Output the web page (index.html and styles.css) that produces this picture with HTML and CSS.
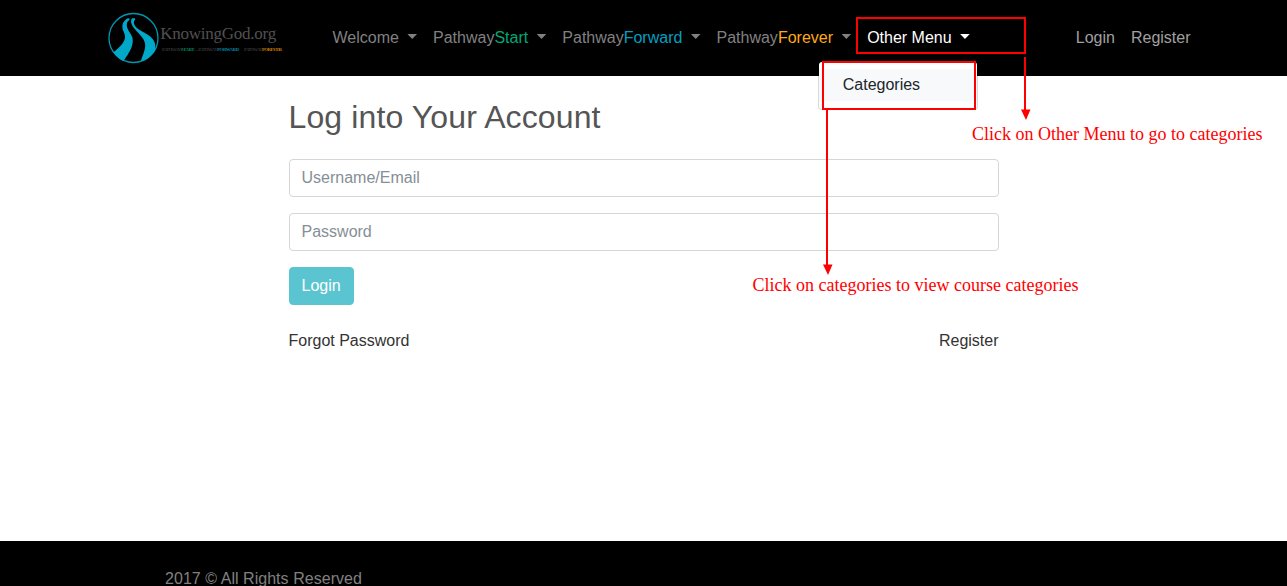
FILE: index.html
```html
<!DOCTYPE html>
<html lang="en">
<head>
<meta charset="utf-8">
<title>KnowingGod.org - Login</title>
<link rel="stylesheet" href="styles.css">
</head>
<body>
<header class="navbar">
  <a class="brand">
    <svg width="176" height="52" viewBox="0 0 176 52">
      <circle cx="25.5" cy="26" r="24.5" fill="none" stroke="#0096b4" stroke-width="1.3"/>
      <path fill="#00a9ca" d="M19.8 6.2C14 9 13.2 15 15.8 20C20 28 13 34 5.500 40.200C8.500 44.500 12 47.500 15.500 49C21 41 26 34 24.500 26C23.500 21 17.500 17 19 11C19.500 9 22.500 8 21.500 6.500Z"/>
      <path fill="#00a9ca" d="M24.300 6.300C22.200 7.800 23 12 25.500 15.500C29.500 21 37 26 37.200 33C37.300 39 34 44 33 49.300C40 47.500 44.500 43 47 38.300C49 29 43 24 36 20.500C30 17.500 25 13.500 26 9.500C26.500 8 28 7.500 26.700 6.200Z"/>
      <text class="logo-name" x="52.200" y="26.500" textLength="116">KnowingGod.org</text>
      <text class="logo-tag" x="54" y="39" textLength="77"><tspan>PATHWAY</tspan><tspan class="start">START</tspan><tspan>—PATHWAY</tspan><tspan class="forward">FORWARD</tspan></text>
      <text class="logo-tag" x="136" y="39" textLength="38"><tspan>PATHWAY</tspan><tspan class="forever">FOREVER</tspan></text>
    </svg>
  </a>
  <nav class="nav">
    <a class="nav-link caret">Welcome </a>
    <a class="nav-link caret">Pathway<span class="start">Start</span> </a>
    <a class="nav-link caret">Pathway<span class="forward">Forward</span> </a>
    <a class="nav-link caret">Pathway<span class="forever">Forever</span> </a>
    <div class="dropdown">
      <a class="nav-link caret active">Other Menu </a>
      <div class="dropdown-menu"><a class="dropdown-item">Categories</a></div>
    </div>
  </nav>
  <nav class="nav account">
    <a class="nav-link">Login</a>
    <a class="nav-link">Register</a>
  </nav>
</header>
<main class="content">
  <h1>Log into Your Account</h1>
  <input class="field" type="text" placeholder="Username/Email">
  <input class="field" type="password" placeholder="Password">
  <button class="button">Login</button>
  <div class="links"><a>Forgot Password</a><a>Register</a></div>
</main>
<footer class="footer">2017 © All Rights Reserved</footer>
<svg class="notes" width="1287" height="586" viewBox="0 0 1287 586">
  <g fill="none" stroke="#f00" stroke-width="2">
    <rect x="857" y="18" width="168" height="35"/>
    <rect x="823" y="62" width="152" height="47"/>
    <path d="M1025 57V112M827 110V266"/>
  </g>
  <path fill="#f00" d="M1021 109.500H1030.500L1026 120ZM823 264.500H832.500L828 275Z"/>
  <text x="972" y="140">Click on Other Menu to go to categories</text>
  <text x="752.500" y="291">Click on categories to view course categories</text>
</svg>
</body>
</html>
```
FILE: styles.css
```css
* { box-sizing: border-box; }
body {
  margin: 0;
  height: 586px;
  overflow: hidden;
  display: flex;
  flex-direction: column;
  background: #fff;
  color: #333;
  font: 16px/24px "Liberation Sans", Arial, sans-serif;
}
.navbar {
  height: 76px;
  flex: none;
  display: flex;
  align-items: flex-start;
  padding: 12px 88.5px 0 108px;
  background: #000;
}
.brand { width: 216.5px; height: 52px; flex: none; }
.brand svg { display: block; }
.logo-name { font: 17px "Liberation Serif", serif; fill: #505050; }
.logo-tag { font: 4.8px "Liberation Serif", serif; fill: #4a4a4a; }
.logo-tag .start, .logo-tag .forward, .logo-tag .forever { font-weight: bold; }
.start { color: #00a878; fill: #008861; }
.forward { color: #00a0c0; fill: #0087a5; }
.forever { color: #ffa916; fill: #d58200; }
.nav { display: flex; padding-top: 6px; }
.nav-link { display: block; padding: 8px; color: #808080; white-space: pre; }
.caret::after {
  content: "";
  display: inline-block;
  width: 9.6px;
  height: 5px;
  margin-left: 4.08px;
  vertical-align: 4px;
  background: currentColor;
  clip-path: polygon(0 0, 100% 0, 50% 100%);
}
.active { color: #fff; }
.account { margin-left: auto; }
.account .nav-link { color: #a0a0a0; }
.dropdown { position: relative; }
.dropdown-menu {
  position: absolute;
  top: 43px;
  right: 0;
  width: 160px;
  padding: 7px 0 8px;
  border: 1px solid rgba(0, 0, 0, .15);
  border-radius: 4px;
  background: #fff;
  background-clip: padding-box;
}
.dropdown-item { display: block; padding: 4px 24px; background: #f7f9fb; color: #212529; }
.content { width: 710px; margin: 0 0 0 288.5px; padding-top: 22px; flex: 1; }
h1 { margin: 0 0 23px; font-size: 32px; line-height: 38px; font-weight: 400; letter-spacing: .12px; color: #555; }
.field {
  display: block;
  width: 100%;
  height: 38px;
  margin: 0 0 16px;
  padding: 6px 12px;
  border: 1px solid #d6d6d6;
  border-radius: 4px;
  font: inherit;
}
.field::placeholder { color: #868e96; opacity: 1; }
.button {
  display: block;
  height: 38px;
  padding: 6px 12px;
  border: 1px solid #5bc4d1;
  border-radius: 4px;
  background: #5bc4d1;
  color: #fff;
  font: inherit;
}
.links { display: flex; justify-content: space-between; margin-top: 24px; }
.footer { height: 45px; flex: none; overflow: hidden; padding: 26px 0 0 165px; letter-spacing: .04px; background: #000; color: #808080; }
.notes { position: absolute; inset: 0; pointer-events: none; }
.notes text { font: 18px "Liberation Serif", serif; fill: #f00; }
```
